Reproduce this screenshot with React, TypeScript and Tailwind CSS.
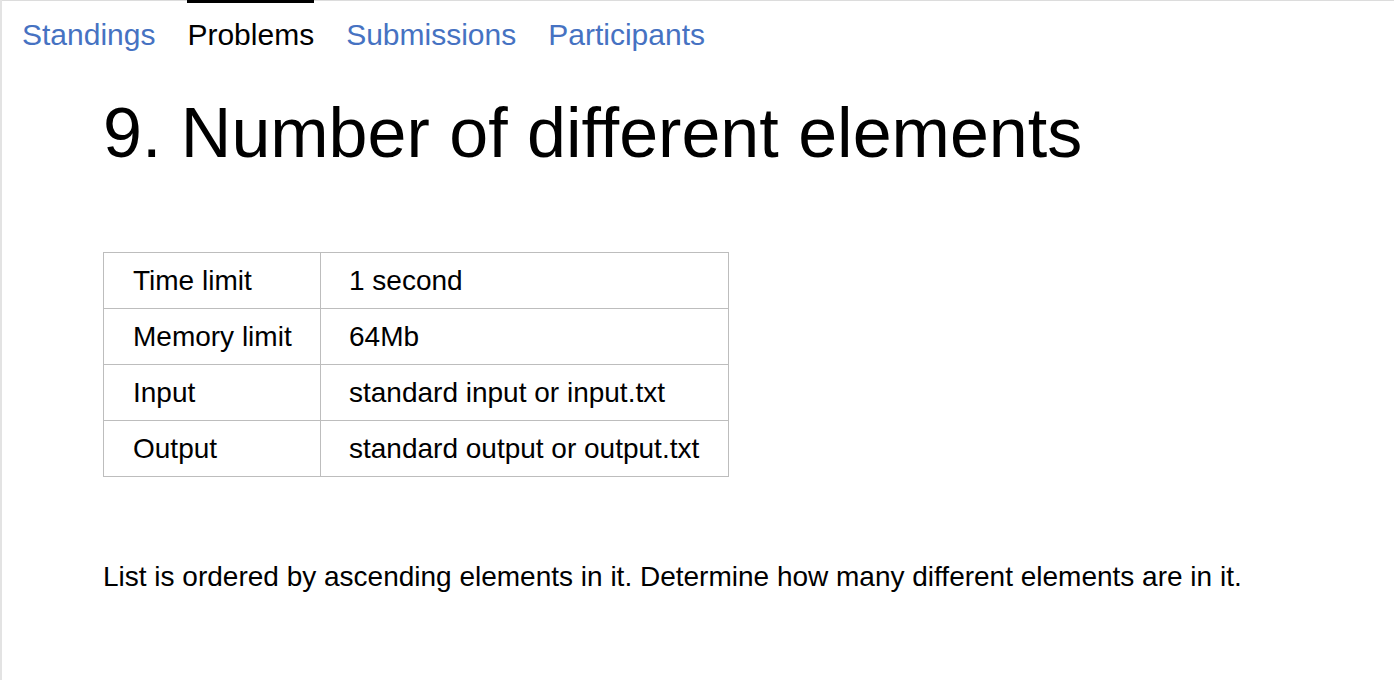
import React from "react";

const tabs = [
  { label: "Standings", active: false },
  { label: "Problems", active: true },
  { label: "Submissions", active: false },
  { label: "Participants", active: false },
];

const rows: [string, string][] = [
  ["Time limit", "1 second"],
  ["Memory limit", "64Mb"],
  ["Input", "standard input or input.txt"],
  ["Output", "standard output or output.txt"],
];

export default function App() {
  return (
    <div className="min-h-[680px] bg-white border-l-2 border-[#e3e3e3] font-['Liberation_Sans',Arial,sans-serif] text-black">
      <nav className="flex gap-[32px] pl-[20px] border-t border-[#dcdcdc]">
        {tabs.map((t) => (
          <a
            key={t.label}
            href="#"
            className={`-mt-px border-t-[3px] pt-[15px] text-[30px] leading-[34px] no-underline ${
              t.active ? "border-black text-black" : "border-transparent text-[#4672c2]"
            }`}
          >
            {t.label}
          </a>
        ))}
      </nav>
      <main className="pl-[101px]">
        <h1 className="mt-[41px] text-[70px] leading-[80px] font-normal">
          9. Number of different elements
        </h1>
        <table className="mt-[79px] border-collapse text-[28px] leading-[32px]">
          <tbody>
            {rows.map(([k, v]) => (
              <tr key={k} className="h-[56px]">
                <td className="w-[217px] border border-[#bdbdbd] pl-[29px] pr-[10px] align-middle">{k}</td>
                <td className="w-[408px] border border-[#bdbdbd] pl-[28px] pr-[10px] align-middle">{v}</td>
              </tr>
            ))}
          </tbody>
        </table>
        <p className="mt-[84px] text-[28px] leading-[32px]">
          List is ordered by ascending elements in it. Determine how many different elements are in it.
        </p>
      </main>
    </div>
  );
}
